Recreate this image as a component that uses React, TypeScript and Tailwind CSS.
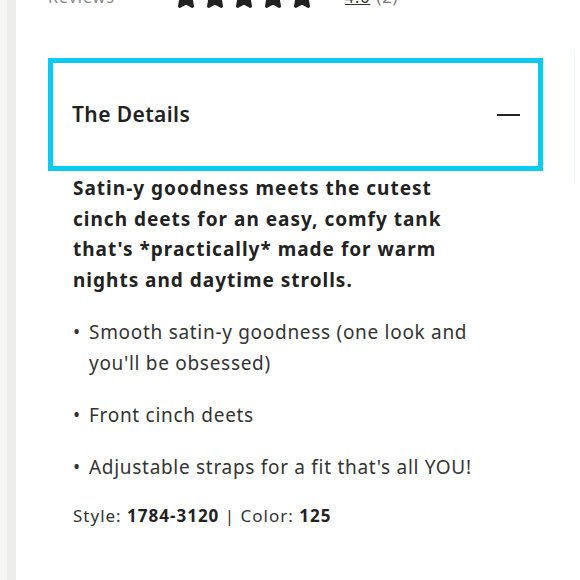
import { Star } from 'lucide-react';

function App() {
  return (
    <div className="h-[580px] w-[580px] overflow-hidden bg-white flex" style={{ fontFamily: '"Noto Sans", Lato, sans-serif' }}>
      <div className="w-[7px] shrink-0 bg-[#f6f6f5]" />
      <div className="w-[9px] shrink-0 bg-[#ededeb]" />
      <div className="flex-1 relative">
        <div className="absolute -top-[16px] left-[32px] flex items-center text-[#333]">
          <span className="text-[16px] text-[#888] tracking-[1px]">Reviews</span>
          <div className="flex gap-[3px] ml-[58px]">
            {[0, 1, 2, 3, 4].map((i) => (
              <Star key={i} className="h-[26px] w-[26px] fill-[#222] text-[#222]" />
            ))}
          </div>
          <span className="text-[16px] underline ml-[30px] tracking-[1px]">4.6</span>
          <span className="text-[16px] text-[#777] ml-[6px] tracking-[1px]">(2)</span>
        </div>
        <div className="ml-[32px] mr-[37px] mt-[58px]">
          <div className="border-[5px] border-[#0ccbf2] h-[113px] flex items-center justify-between pl-[19px] pr-[18px]">
            <h2 className="text-[21px] font-semibold text-[#222] tracking-[0.4px]">The Details</h2>
            <div className="w-[23px] h-[2px] bg-[#222]" />
          </div>
          <div className="pl-[25px] pt-[2px] w-[437px] text-[#222]">
            <p className="text-[19px] font-bold leading-[30.5px] tracking-[1px]">
              Satin-y goodness meets the cutest cinch deets for an easy, comfy tank that's *practically* made for warm nights and daytime strolls.
            </p>
            <ul className="mt-[22px] flex flex-col gap-[21px] text-[19px] leading-[31px] text-[#333] tracking-[0.7px]">
              <li className="flex">
                <span className="w-[16px] shrink-0">•</span>
                <span>Smooth satin-y goodness (one look and you'll be obsessed)</span>
              </li>
              <li className="flex">
                <span className="w-[16px] shrink-0">•</span>
                <span>Front cinch deets</span>
              </li>
              <li className="flex">
                <span className="w-[16px] shrink-0">•</span>
                <span>Adjustable straps for a fit that's all YOU!</span>
              </li>
            </ul>
            <p className="mt-[20px] text-[17px] text-[#333] tracking-[1px]">
              Style: <b className="font-bold text-[#222]">1784-3120</b> | Color: <b className="font-bold text-[#222]">125</b>
            </p>
          </div>
        </div>
        <div className="absolute right-[5px] top-[50px] h-[137px] w-[1px] bg-[#eefbff]" />
      </div>
    </div>
  );
}

export default App;
